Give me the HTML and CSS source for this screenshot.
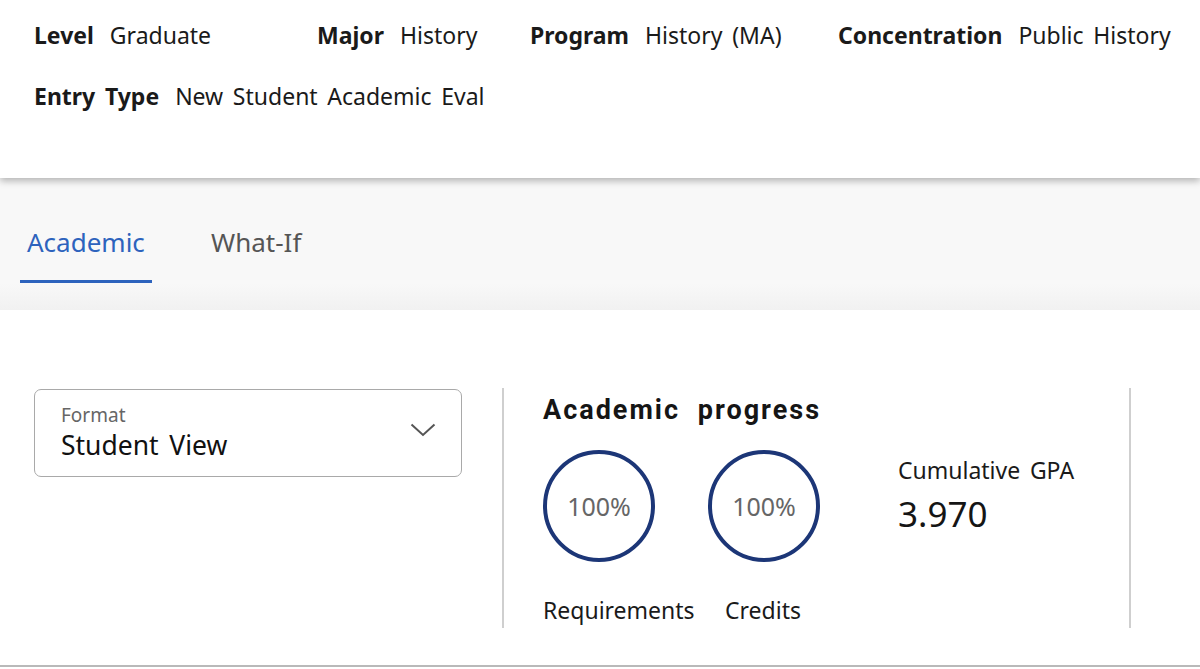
FILE: index.html
```html
<!DOCTYPE html>
<html>
<head>
<meta charset="utf-8">
<link rel="stylesheet" href="styles.css">
</head>
<body>
<header class="info">
  <div class="info-row">
    <div class="field f-level"><span class="lbl">Level</span><span class="val">Graduate</span></div>
    <div class="field f-major"><span class="lbl">Major</span><span class="val">History</span></div>
    <div class="field f-prog"><span class="lbl">Program</span><span class="val">History (MA)</span></div>
    <div class="field"><span class="lbl">Concentration</span><span class="val">Public History</span></div>
  </div>
  <div class="info-row row2">
    <div class="field"><span class="lbl">Entry Type</span><span class="val">New Student Academic Eval</span></div>
  </div>
</header>
<nav class="tabs">
  <div class="tab active">Academic</div>
  <div class="tab">What-If</div>
</nav>
<main class="content">
  <div class="select">
    <div class="select-text">
      <div class="select-label">Format</div>
      <div class="select-value">Student View</div>
    </div>
    <svg class="chev" width="26" height="14" viewBox="0 0 26 14"><path d="M1.5 1.5 L13 12 L24.5 1.5" fill="none" stroke="#555" stroke-width="2"/></svg>
  </div>
  <div class="divider"></div>
  <section class="progress">
    <h2>Academic progress</h2>
    <div class="stats">
      <div class="ring-wrap">
        <div class="ring">100%</div>
        <div class="ring-label">Requirements</div>
      </div>
      <div class="ring-wrap">
        <div class="ring">100%</div>
        <div class="ring-label">Credits</div>
      </div>
      <div class="gpa">
        <div class="gpa-label">Cumulative GPA</div>
        <div class="gpa-value">3.970</div>
      </div>
    </div>
  </section>
  <div class="divider d2"></div>
</main>
</body>
</html>
```
FILE: styles.css
```css
html, body { margin: 0; padding: 0; }
body {
  width: 1200px;
  height: 669px;
  overflow: hidden;
  font-family: "Noto Sans", "Open Sans", sans-serif;
  color: #1a1a1a;
  background: #fff;
  word-spacing: 3.7px;
}
.info {
  position: relative;
  z-index: 2;
  height: 178px;
  background: #fff;
  box-shadow: 0 3px 7px rgba(0,0,0,0.28);
  padding: 19px 0 0 34px;
  box-sizing: border-box;
}
.info-row { display: flex; height: 32px; align-items: center; font-size: 23px; }
.row2 { margin-top: 29px; }
.field { display: flex; align-items: center; }
.lbl { font-weight: 700; margin-right: 16px; }
.val { font-weight: 400; }
.f-level { width: 283px; }
.f-major { width: 213px; }
.f-prog { width: 308px; }
.tabs {
  height: 132px;
  background: linear-gradient(#f8f8f8 0, #f8f8f8 80%, #f1f1f1 100%);
  display: flex;
  padding-left: 20px;
  box-sizing: border-box;
}
.tab {
  font-size: 26px;
  color: #555;
  padding: 46px 7px 0 7px;
  height: 105px;
  box-sizing: border-box;
  margin-right: 52px;
}
.tab.active {
  color: #2d63bd;
  border-bottom: 3px solid #2d63bd;
  width: 132px;
}
.content {
  height: 357px;
  border-bottom: 2px solid #b9b9b9;
  box-sizing: border-box;
  display: flex;
  align-items: flex-start;
  padding: 78px 0 0 34px;
}
.select {
  width: 428px;
  height: 88px;
  margin-top: 1px;
  border: 1.5px solid #a9a9a9;
  border-radius: 7px;
  box-sizing: border-box;
  display: flex;
  align-items: center;
  justify-content: space-between;
  padding: 0 25px 0 26px;
}
.select-text { padding-top: 2px; }
.select-label { font-size: 19px; color: #666; line-height: 24px; margin-top: -2px; }
.select-value { font-size: 26.5px; color: #111; line-height: 36px; }
.chev { margin-top: -6px; }
.divider {
  width: 2px;
  height: 240px;
  background: #cfcfcf;
  margin-left: 40px;
}
.d2 { margin-left: 0; }
.progress { padding-left: 39px; width: 625px; box-sizing: border-box; }
.progress h2 {
  font-family: Roboto, sans-serif;
  font-weight: 700;
  font-size: 27px;
  margin: 4px 0 0 0;
  line-height: 36px;
  letter-spacing: 2px;
  word-spacing: 9px;
  color: #151515;
}
.stats { display: flex; margin-top: 22px; }
.ring-wrap { width: 165px; }
.ring {
  width: 112px;
  height: 112px;
  border: 4px solid #1c3677;
  border-radius: 50%;
  box-sizing: border-box;
  display: flex;
  align-items: center;
  justify-content: center;
  font-size: 25px;
  color: #666;
}
.ring-label { font-size: 23px; margin-top: 33px; line-height: 30px; color: #1a1a1a; }
.ring-wrap:nth-child(2) .ring-label { margin-left: 17px; }
.gpa { margin-left: 25px; padding-top: 4px; }
.gpa-label { font-size: 23px; line-height: 32px; }
.gpa-value { font-size: 35px; line-height: 56px; color: #151515; }
```
